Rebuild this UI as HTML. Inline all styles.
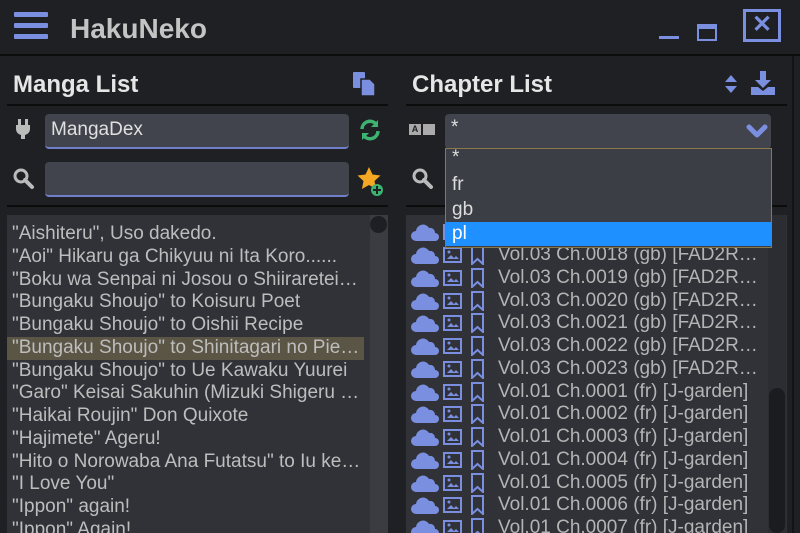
<!DOCTYPE html>
<html><head><meta charset="utf-8"><style>
*{margin:0;padding:0;box-sizing:border-box}
body{width:800px;height:533px;overflow:hidden;background:#1f2023;font-family:"Liberation Sans",Arial,sans-serif;position:relative;color:#c8c8c8}
.abs{position:absolute}
.title{left:70px;top:13px;font-size:28px;font-weight:bold;color:#c4c4c4}
.hline{height:2px;background:#0c0c0d}
.h2{font-size:24px;font-weight:bold;color:#e6e6e6}
.inp{background:#41444c;border-radius:4px;border-bottom:2px solid #6f7fc8;font-size:19px;color:#e0e0e0;padding:5px 6px}
.list{background:#303238;overflow:hidden}
.row{height:22.75px;line-height:22.75px;font-size:19px;color:#bdbdbd;white-space:nowrap;padding-left:5px}
.crow{height:22.75px;display:flex;align-items:center;font-size:19px;color:#b4b4b4;white-space:nowrap}
.crow svg{flex:none}
</style></head><body>
<div class="abs" style="left:14px;top:12px;width:34px;height:28px">
<div style="height:5px;background:#7b8fe0;margin-bottom:6px;border-radius:1px"></div>
<div style="height:5px;background:#7b8fe0;margin-bottom:6px;border-radius:1px"></div>
<div style="height:5px;background:#7b8fe0;border-radius:1px"></div></div>
<div class="abs title">HakuNeko</div>
<div class="abs" style="left:659px;top:36px;width:20px;height:3px;background:#7b8fe0"></div>
<div class="abs" style="left:697px;top:24px;width:20px;height:17px;border:2px solid #7b8fe0;border-top-width:5px"></div>
<div class="abs" style="left:743px;top:9px;width:38px;height:33px;border:3px solid #7b8fe0;color:#7b8fe0;font-size:24px;font-weight:bold;text-align:center;line-height:26px">✕</div>
<div class="abs hline" style="left:0;top:54px;width:800px"></div>
<div class="abs" style="left:792px;top:56px;width:2px;height:477px;background:#131315"></div>

<div class="abs h2" style="left:13px;top:71px">Manga List</div>
<svg class="abs" style="left:352px;top:71px" width="24" height="26" viewBox="0 0 24 26"><rect x="1" y="1" width="12" height="16" rx="1" fill="#7b8fe0"/><path d="M9 8h9l5 5v12H9z" fill="#7b8fe0" stroke="#1f2023" stroke-width="1.5"/></svg>
<div class="abs hline" style="left:7px;top:104px;width:381px"></div>
<svg class="abs" style="left:15px;top:118px" width="16" height="22" viewBox="0 0 16 22"><rect x="3" y="1" width="3" height="6" fill="#bbb"/><rect x="10" y="1" width="3" height="6" fill="#bbb"/><path d="M1 7h14v4a6 6 0 0 1-5 6v4H6v-4a6 6 0 0 1-5-6z" fill="#bbb"/></svg>
<div class="abs inp" style="left:45px;top:114px;width:304px;height:35px">MangaDex</div>
<svg class="abs" style="left:359px;top:119px" width="22" height="22" viewBox="0 0 22 22"><path d="M3 10a8 8 0 0 1 14-5" fill="none" stroke="#3cb371" stroke-width="3.5"/><path d="M19 1v7h-7z" fill="#3cb371"/><path d="M19 12a8 8 0 0 1-14 5" fill="none" stroke="#3cb371" stroke-width="3.5"/><path d="M3 21v-7h7z" fill="#3cb371"/></svg>
<svg class="abs" style="left:13px;top:168px" width="22" height="22" viewBox="0 0 22 22"><circle cx="8" cy="8" r="6" fill="none" stroke="#bbb" stroke-width="3"/><path d="M12 12l7 7" stroke="#bbb" stroke-width="4" stroke-linecap="round"/></svg>
<div class="abs inp" style="left:45px;top:162px;width:304px;height:35px"></div>
<svg class="abs" style="left:357px;top:166px" width="28" height="32" viewBox="0 0 28 32"><path d="M12 1l3.5 7.5 8 1-6 5.5 1.6 8-7.1-4-7.1 4 1.6-8-6-5.5 8-1z" fill="#f5a623"/><circle cx="20" cy="24" r="6" fill="#3cb371"/><path d="M20 20v8M16 24h8" stroke="#1f2023" stroke-width="2"/></svg>
<div class="abs hline" style="left:7px;top:205px;width:381px"></div>
<div class="abs list" style="left:7px;top:215px;width:381px;height:318px;padding-top:8px">
<div class="row">"Aishiteru", Uso dakedo.</div>
<div class="row">"Aoi" Hikaru ga Chikyuu ni Ita Koro......</div>
<div class="row">"Boku wa Senpai ni Josou o Shiiraretei…</div>
<div class="row">"Bungaku Shoujo" to Koisuru Poet</div>
<div class="row">"Bungaku Shoujo" to Oishii Recipe</div>
<div class="row" style="background:#5b5546;width:357px">"Bungaku Shoujo" to Shinitagari no Pie…</div>
<div class="row">"Bungaku Shoujo" to Ue Kawaku Yuurei</div>
<div class="row">"Garo" Keisai Sakuhin (Mizuki Shigeru …</div>
<div class="row">"Haikai Roujin" Don Quixote</div>
<div class="row">"Hajimete" Ageru!</div>
<div class="row">"Hito o Norowaba Ana Futatsu" to Iu ke…</div>
<div class="row">"I Love You"</div>
<div class="row">"Ippon" again!</div>
<div class="row">"Ippon" Again!</div>
</div>
<div class="abs" style="left:370px;top:215px;width:18px;height:318px;background:#3a3c42"></div>
<div class="abs" style="left:370px;top:216px;width:17px;height:17px;border-radius:50%;background:#1e1f22"></div>

<div class="abs h2" style="left:412px;top:71px">Chapter List</div>
<svg class="abs" style="left:724px;top:73px" width="14" height="22" viewBox="0 0 14 22"><path d="M1 9L7 2l6 7z M1 13l6 7 6-7z" fill="#7b8fe0"/></svg>
<svg class="abs" style="left:750px;top:70px" width="26" height="26" viewBox="0 0 26 26"><path d="M10 1h6v9h5l-8 8-8-8h5z" fill="#7b8fe0"/><path d="M1 17h7l5 4 5-4h7v8H1z" fill="#7b8fe0"/></svg>
<div class="abs hline" style="left:406px;top:104px;width:381px"></div>
<div class="abs" style="left:409px;top:124px;width:26px;height:11px;display:flex;gap:2px"><div style="width:12px;background:#aaa;color:#222;font-size:9px;font-weight:bold;text-align:center;line-height:11px">A</div><div style="width:12px;background:#aaa"></div></div>
<div class="abs inp" style="left:445px;top:114px;width:326px;height:35px;border-bottom:none;padding-top:3px">*</div>
<svg class="abs" style="left:746px;top:124px" width="22" height="14" viewBox="0 0 22 14"><path d="M3 3l8 8 8-8" fill="none" stroke="#7b8fe0" stroke-width="5" stroke-linecap="round" stroke-linejoin="round"/></svg>
<svg class="abs" style="left:412px;top:168px" width="22" height="22" viewBox="0 0 22 22"><circle cx="8" cy="8" r="6" fill="none" stroke="#bbb" stroke-width="3"/><path d="M12 12l7 7" stroke="#bbb" stroke-width="4" stroke-linecap="round"/></svg>
<div class="abs hline" style="left:406px;top:205px;width:381px"></div>
<div class="abs list" style="left:406px;top:215px;width:381px;height:318px;padding-top:6px">
<div id="cr"></div>
</div>
<div class="abs" style="left:768px;top:215px;width:18px;height:318px;background:#2b2d32"></div>
<div class="abs" style="left:769px;top:388px;width:16px;height:145px;border-radius:8px;background:#1b1c1f"></div>

<div class="abs" style="left:445px;top:148px;width:327px;height:100px;background:#3b3e44;border:1px solid #8a7a4a;font-size:19px;color:#dcdcdc">
<div style="height:24px;padding-left:6px;line-height:18px">*</div>
<div style="height:25px;padding-left:6px;line-height:24px">fr</div>
<div style="height:24px;padding-left:6px;line-height:24px">gb</div>
<div style="height:24px;padding-left:6px;line-height:24px;background:#1e90ff;color:#fff">pl</div>
</div>
<script>
var t=["Vol.03 Ch.0017 (gb) [FAD2R…","Vol.03 Ch.0018 (gb) [FAD2R…","Vol.03 Ch.0019 (gb) [FAD2R…","Vol.03 Ch.0020 (gb) [FAD2R…","Vol.03 Ch.0021 (gb) [FAD2R…","Vol.03 Ch.0022 (gb) [FAD2R…","Vol.03 Ch.0023 (gb) [FAD2R…","Vol.01 Ch.0001 (fr) [J-garden]","Vol.01 Ch.0002 (fr) [J-garden]","Vol.01 Ch.0003 (fr) [J-garden]","Vol.01 Ch.0004 (fr) [J-garden]","Vol.01 Ch.0005 (fr) [J-garden]","Vol.01 Ch.0006 (fr) [J-garden]","Vol.01 Ch.0007 (fr) [J-garden]"];
var h="";t.forEach(function(s){h+='<div class="crow"><svg width="32" height="20" viewBox="0 0 32 20" style="margin-left:4px"><path d="M6 19a5 5 0 0 1 0-10 7 7 0 0 1 13-3 5 5 0 0 1 6 5 4 4 0 0 1 0 8z" fill="#7b8fe0"/></svg><svg width="22" height="18" viewBox="0 0 22 18"><rect x="2" y="2" width="17" height="14" fill="none" stroke="#7b8fe0" stroke-width="2"/><path d="M5 13l4-4 3 3 2-2 3 3z" fill="#7b8fe0"/><circle cx="7" cy="6" r="1.5" fill="#7b8fe0"/></svg><svg width="22" height="20" viewBox="0 0 22 20" style="margin-left:4px"><path d="M4 1h11v18l-5.5-5L4 19z" fill="none" stroke="#7b8fe0" stroke-width="2"/></svg><span style="margin-left:8px">'+s+'</span></div>'});
document.getElementById("cr").innerHTML=h;
</script>
</body></html>
